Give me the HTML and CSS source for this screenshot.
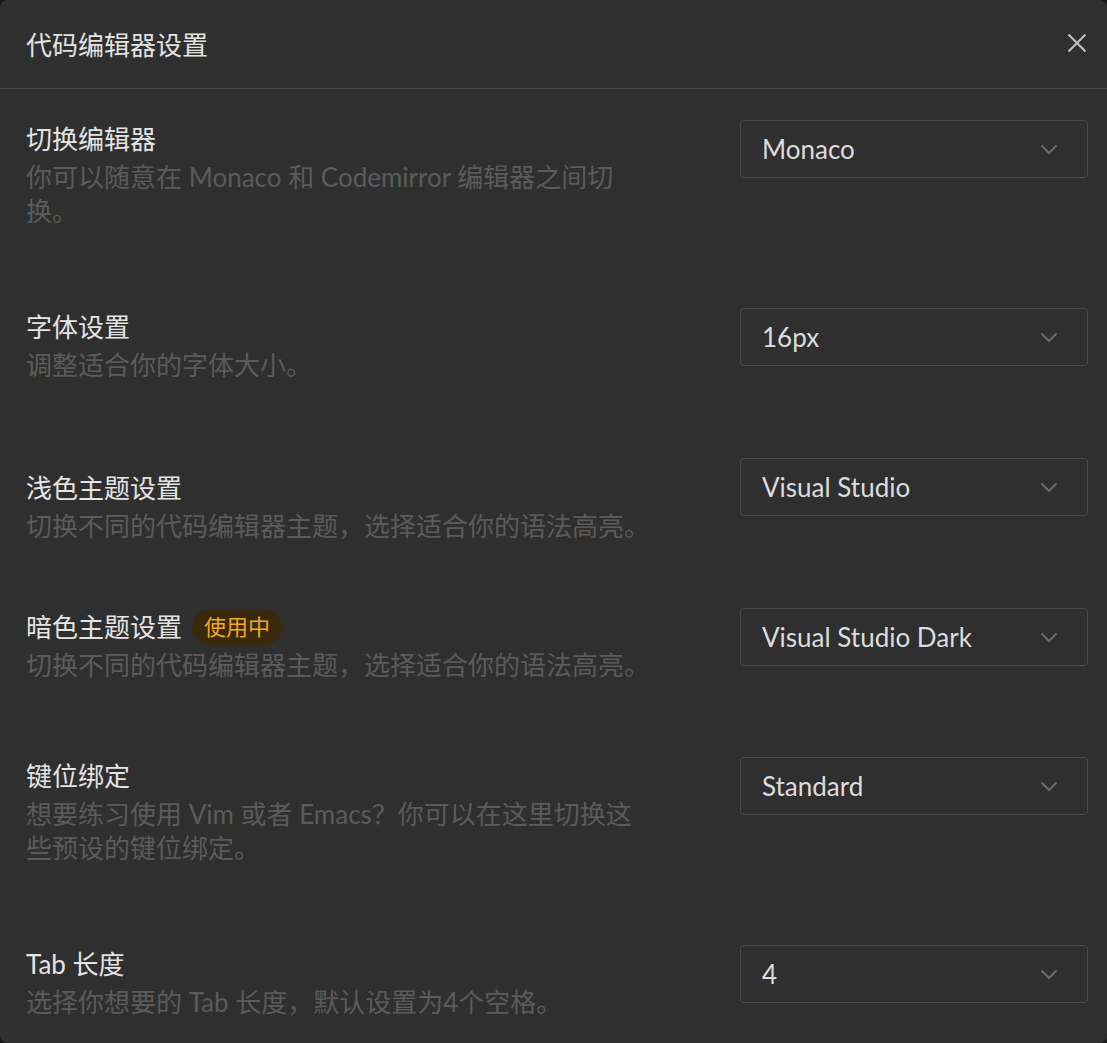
FILE: index.html
```html
<!DOCTYPE html>
<html lang="zh-CN">
<head>
<meta charset="utf-8">
<title>代码编辑器设置</title>
<link rel="stylesheet" href="styles.css">
</head>
<body>
<div class="dialog">
  <header class="dialog-header">
    <h1 class="dialog-title">代码编辑器设置</h1>
    <button class="close-btn" aria-label="关闭">
      <svg width="20" height="20" viewBox="0 0 20 20"><path d="M1.5 1.5 L18.5 18.5 M18.5 1.5 L1.5 18.5" stroke="#bdbdbd" stroke-width="2.2" fill="none"/></svg>
    </button>
  </header>
  <div class="dialog-body">
    <div class="row row-1">
      <div class="row-text">
        <div class="row-title">切换编辑器</div>
        <div class="row-desc">你可以随意在 Monaco 和 Codemirror 编辑器之间切换。</div>
      </div>
      <div class="select"><span class="select-value">Monaco</span><svg class="chev" width="18" height="11" viewBox="0 0 18 11"><path d="M1.5 1.5 L9 9 L16.5 1.5" stroke="#6b6b6b" stroke-width="2" fill="none"/></svg></div>
    </div>
    <div class="row row-2">
      <div class="row-text">
        <div class="row-title">字体设置</div>
        <div class="row-desc">调整适合你的字体大小。</div>
      </div>
      <div class="select"><span class="select-value">16px</span><svg class="chev" width="18" height="11" viewBox="0 0 18 11"><path d="M1.5 1.5 L9 9 L16.5 1.5" stroke="#6b6b6b" stroke-width="2" fill="none"/></svg></div>
    </div>
    <div class="row row-3">
      <div class="row-text">
        <div class="row-title">浅色主题设置</div>
        <div class="row-desc">切换不同的代码编辑器主题，选择适合你的语法高亮。</div>
      </div>
      <div class="select"><span class="select-value">Visual Studio</span><svg class="chev" width="18" height="11" viewBox="0 0 18 11"><path d="M1.5 1.5 L9 9 L16.5 1.5" stroke="#6b6b6b" stroke-width="2" fill="none"/></svg></div>
    </div>
    <div class="row row-4">
      <div class="row-text">
        <div class="row-title">暗色主题设置<span class="badge">使用中</span></div>
        <div class="row-desc">切换不同的代码编辑器主题，选择适合你的语法高亮。</div>
      </div>
      <div class="select"><span class="select-value">Visual Studio Dark</span><svg class="chev" width="18" height="11" viewBox="0 0 18 11"><path d="M1.5 1.5 L9 9 L16.5 1.5" stroke="#6b6b6b" stroke-width="2" fill="none"/></svg></div>
    </div>
    <div class="row row-5">
      <div class="row-text">
        <div class="row-title">键位绑定</div>
        <div class="row-desc">想要练习使用 Vim 或者 Emacs？你可以在这里切换这些预设的键位绑定。</div>
      </div>
      <div class="select"><span class="select-value">Standard</span><svg class="chev" width="18" height="11" viewBox="0 0 18 11"><path d="M1.5 1.5 L9 9 L16.5 1.5" stroke="#6b6b6b" stroke-width="2" fill="none"/></svg></div>
    </div>
    <div class="row row-6">
      <div class="row-text">
        <div class="row-title">Tab 长度</div>
        <div class="row-desc">选择你想要的 Tab 长度，默认设置为4个空格。</div>
      </div>
      <div class="select"><span class="select-value">4</span><svg class="chev" width="18" height="11" viewBox="0 0 18 11"><path d="M1.5 1.5 L9 9 L16.5 1.5" stroke="#6b6b6b" stroke-width="2" fill="none"/></svg></div>
    </div>
  </div>
</div>
</body>
</html>
```
FILE: styles.css
```css
html, body {
  margin: 0;
  padding: 0;
  background: #151515;
}
body {
  font-family: "Lato", "Noto Sans CJK SC", sans-serif;
  width: 1107px;
  height: 1043px;
  overflow: hidden;
}
.dialog {
  width: 1107px;
  height: 1043px;
  background: #2f2f2f;
  border-radius: 7px;
  overflow: hidden;
  box-sizing: border-box;
}
.dialog-header {
  height: 89px;
  box-sizing: border-box;
  border-bottom: 1px solid #4a4a4a;
  display: flex;
  align-items: center;
  justify-content: space-between;
  padding: 0 20px 0 26px;
}
.dialog-title {
  margin: 2px 0 0 0;
  font-size: 26px;
  font-weight: 400;
  color: #e2e2e2;
  line-height: 40px;
}
.close-btn {
  background: none;
  border: 0;
  padding: 0;
  width: 20px;
  height: 20px;
  display: flex;
  margin-top: -2px;
}
.dialog-body {
  padding: 29px 19px 0 26px;
  display: flex;
  flex-direction: column;
}
.row {
  display: flex;
  justify-content: space-between;
  align-items: flex-start;
}
.row-2 { margin-top: 78px; }
.row-3 { margin-top: 74px; }
.row-3 .row-text { margin-top: 11px; }
.row-4 { margin-top: 63px; }
.row-5 { margin-top: 73px; }
.row-6 { margin-top: 78px; }
.row-text {
  width: 624px;
}
.row-title {
  font-size: 26px;
  line-height: 42px;
  color: #e4e4e4;
  display: flex;
  align-items: center;
}
.row-desc {
  font-size: 26px;
  line-height: 34px;
  color: #5b5b5b;
}
.badge {
  margin-left: 10px;
  height: 36px;
  padding: 0 12px;
  border-radius: 18px;
  background: #3a2a0d;
  color: #f5a524;
  font-size: 22px;
  line-height: 36px;
}
.select {
  margin-top: 2px;
  width: 348px;
  height: 58px;
  box-sizing: border-box;
  border: 1.5px solid #4a4a4a;
  border-radius: 4px;
  display: flex;
  align-items: center;
  justify-content: space-between;
  padding: 0 29px 0 21px;
}
.select-value {
  font-size: 26px;
  color: #dcdcdc;
  line-height: 34px;
}
.chev {
  display: block;
}
```
